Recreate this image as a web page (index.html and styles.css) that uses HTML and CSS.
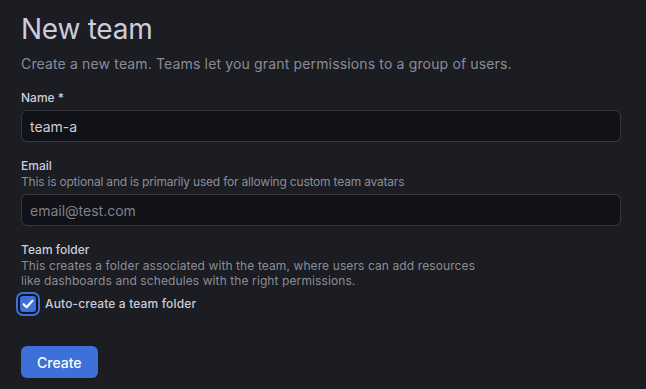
FILE: index.html
```html
<!DOCTYPE html>
<html>
<head>
<meta charset="utf-8">
<link rel="stylesheet" href="styles.css">
</head>
<body>
<main class="page">
  <h1 class="title">New team</h1>
  <p class="subtitle">Create a new team. Teams let you grant permissions to a group of users.</p>

  <div class="field">
    <label class="label" for="name">Name *</label>
    <input class="input" id="name" type="text" value="team-a">
  </div>

  <div class="field">
    <label class="label" for="email">Email</label>
    <div class="desc narrow">This is optional and is primarily used for allowing custom team avatars</div>
    <input class="input" id="email" type="text" placeholder="email@test.com">
  </div>

  <div class="field folder">
    <div class="label">Team folder</div>
    <div class="desc wrap">This creates a folder associated with the team, where users can add resources like dashboards and schedules with the right permissions.</div>
    <label class="check-row">
      <span class="checkbox">
        <svg viewBox="0 0 16 16" width="16" height="16"><path d="M3.6 8.3 L6.6 11.2 L12.4 4.8" fill="none" stroke="#fff" stroke-width="2.2" stroke-linecap="round" stroke-linejoin="round"/></svg>
      </span>
      <span class="check-label">Auto-create a team folder</span>
    </label>
  </div>

  <button class="btn" type="button">Create</button>
</main>
</body>
</html>
```

FILE: styles.css
```css
html, body {
  margin: 0;
  padding: 0;
  background: #1b1d22;
  height: 100%;
}
body {
  font-family: Inter, "Noto Sans", sans-serif;
  color: #ccccdc;
}
.page {
  padding: 12px 25px 0 21px;
  display: flex;
  flex-direction: column;
  align-items: flex-start;
}
.title {
  margin: 0;
  font-size: 28px;
  line-height: 34px;
  font-weight: 400;
  letter-spacing: -0.25px;
  color: #ccccdc;
}
.subtitle {
  margin: 8px 0 0;
  font-size: 14px;
  line-height: 20px;
  letter-spacing: 0.15px;
  color: rgba(204, 204, 220, 0.65);
}
.field {
  margin-top: 16px;
  display: flex;
  flex-direction: column;
  align-self: stretch;
}
.label {
  font-size: 12px;
  line-height: 16px;
  font-weight: 500;
  color: #ccccdc;
  margin-bottom: 4px;
}
.desc {
  font-size: 12px;
  line-height: 15px;
  color: rgba(204, 204, 220, 0.65);
  margin-top: -4px;
  margin-bottom: 5px;
}
.desc.narrow {
  letter-spacing: -0.2px;
}
.desc.wrap {
  max-width: 470px;
  letter-spacing: 0.1px;
  margin-bottom: 8px;
}
.input {
  box-sizing: border-box;
  height: 32px;
  width: 100%;
  background: #111217;
  border: 1px solid rgba(204, 204, 220, 0.2);
  border-radius: 6px;
  padding: 0 8px;
  font-family: inherit;
  font-size: 14px;
  color: #ccccdc;
  outline: none;
}
.input::placeholder {
  color: rgba(204, 204, 220, 0.6);
}
.check-row {
  display: flex;
  align-items: center;
  gap: 9px;
}
.checkbox {
  box-sizing: border-box;
  width: 16px;
  height: 16px;
  margin-left: -1px;
  border-radius: 3px;
  background: #3d71d9;
  box-shadow: 0 0 0 2px #111217, 0 0 0 4px #3d71d9;
  display: flex;
}
.check-label {
  font-size: 12px;
  line-height: 16px;
  font-weight: 500;
  letter-spacing: 0.15px;
  color: #ccccdc;
}
.btn {
  margin-top: 34px;
  height: 32px;
  padding: 0 16px;
  border: none;
  border-radius: 6px;
  background: #3d71d9;
  color: #fff;
  font-family: inherit;
  font-size: 14px;
  font-weight: 500;
}
```
